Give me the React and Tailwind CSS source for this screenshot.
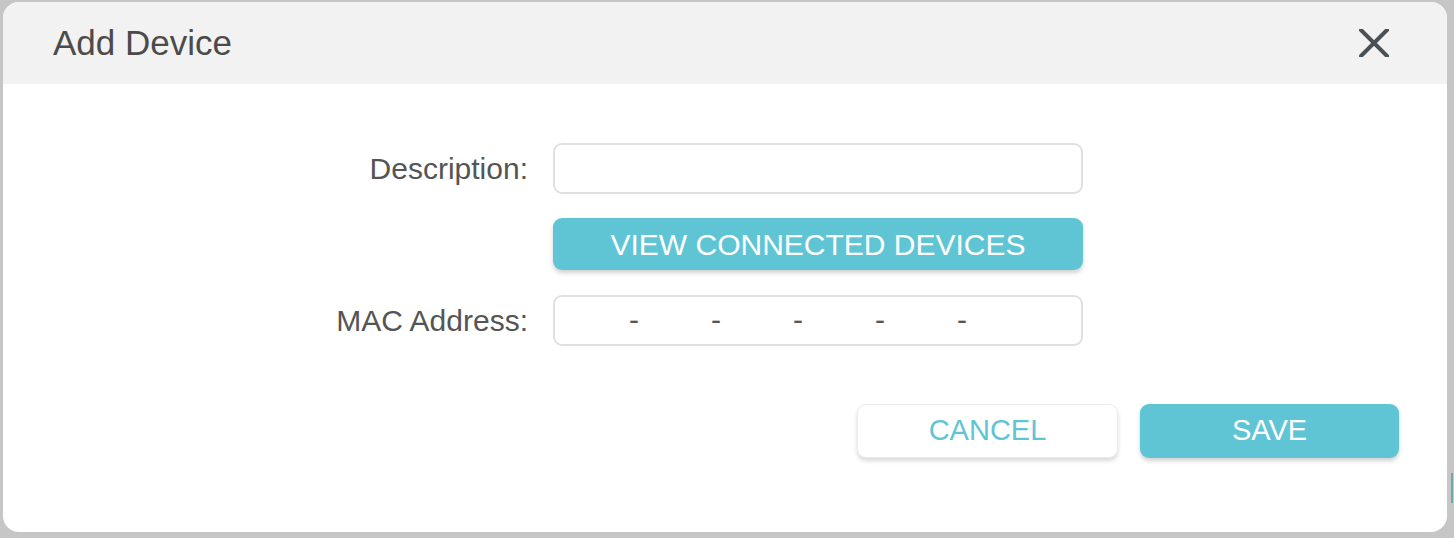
import React from 'react';

const font = { fontFamily: '"Liberation Sans", Arial, sans-serif' };

const CloseIcon = () => (
    <svg width="30" height="28" viewBox="0 0 30 28" fill="none">
        <path d="M2 1 L28 27 M28 1 L2 27" stroke="#4a5156" strokeWidth="4" strokeLinecap="round" />
    </svg>
);

const MacField = () => {
    const parts = [0, 1, 2, 3, 4, 5];
    return (
        <div className="flex items-center w-[530px] h-[51px] border-2 border-[#e0e0e0] rounded-[9px] bg-white">
            {parts.map((i) => (
                <React.Fragment key={i}>
                    <div className="w-[74px] h-full" />
                    {i < 5 && <span className="w-[8px] text-center text-[30px] leading-none text-[#555] -mt-[2px]">-</span>}
                </React.Fragment>
            ))}
        </div>
    );
};

export default function App() {
    return (
        <div className="w-[1454px] h-[538px] bg-[#c6c6c6] flex pt-[2px] pl-[3px] overflow-hidden" style={font}>
            <div className="w-[1444px] h-[530px] bg-white rounded-[16px] overflow-hidden flex flex-col">
                <div className="h-[82px] bg-[#f2f2f2] flex items-center justify-between pl-[50px] pr-[58px]">
                    <span className="text-[35px] text-[#4b4b4b]">Add Device</span>
                    <CloseIcon />
                </div>

                <div className="flex flex-col pt-[59px]">
                    <div className="flex items-center">
                        <label className="w-[550px] pr-[25px] text-right text-[30px] text-[#555]">Description:</label>
                        <input className="w-[530px] h-[51px] border-2 border-[#e0e0e0] rounded-[9px] bg-white outline-none" />
                    </div>

                    <div className="flex mt-[24px] pl-[550px]">
                        <button className="w-[530px] h-[52px] rounded-[9px] bg-[#5fc5d4] text-white text-[30px] shadow-[0_3px_4px_rgba(0,0,0,0.18)]">
                            VIEW CONNECTED DEVICES
                        </button>
                    </div>

                    <div className="flex items-center mt-[25px]">
                        <label className="w-[550px] pr-[25px] text-right text-[30px] text-[#555]">MAC Address:</label>
                        <MacField />
                    </div>

                    <div className="flex justify-end gap-[22px] mt-[58px] pr-[48px]">
                        <button className="w-[261px] h-[54px] rounded-[9px] bg-white border border-[#ececec] text-[#5fc5d4] text-[29px] shadow-[0_3px_4px_rgba(0,0,0,0.15)]">
                            CANCEL
                        </button>
                        <button className="w-[259px] h-[54px] rounded-[9px] bg-[#5fc5d4] text-white text-[29px] shadow-[0_3px_4px_rgba(0,0,0,0.18)]">
                            SAVE
                        </button>
                    </div>
                </div>
            </div>
            <div className="flex-1 flex flex-col items-end pr-[1px]">
                <div className="mt-[471px] w-[2px] h-[30px] bg-[#6aa9ad]" />
            </div>
        </div>
    );
}
